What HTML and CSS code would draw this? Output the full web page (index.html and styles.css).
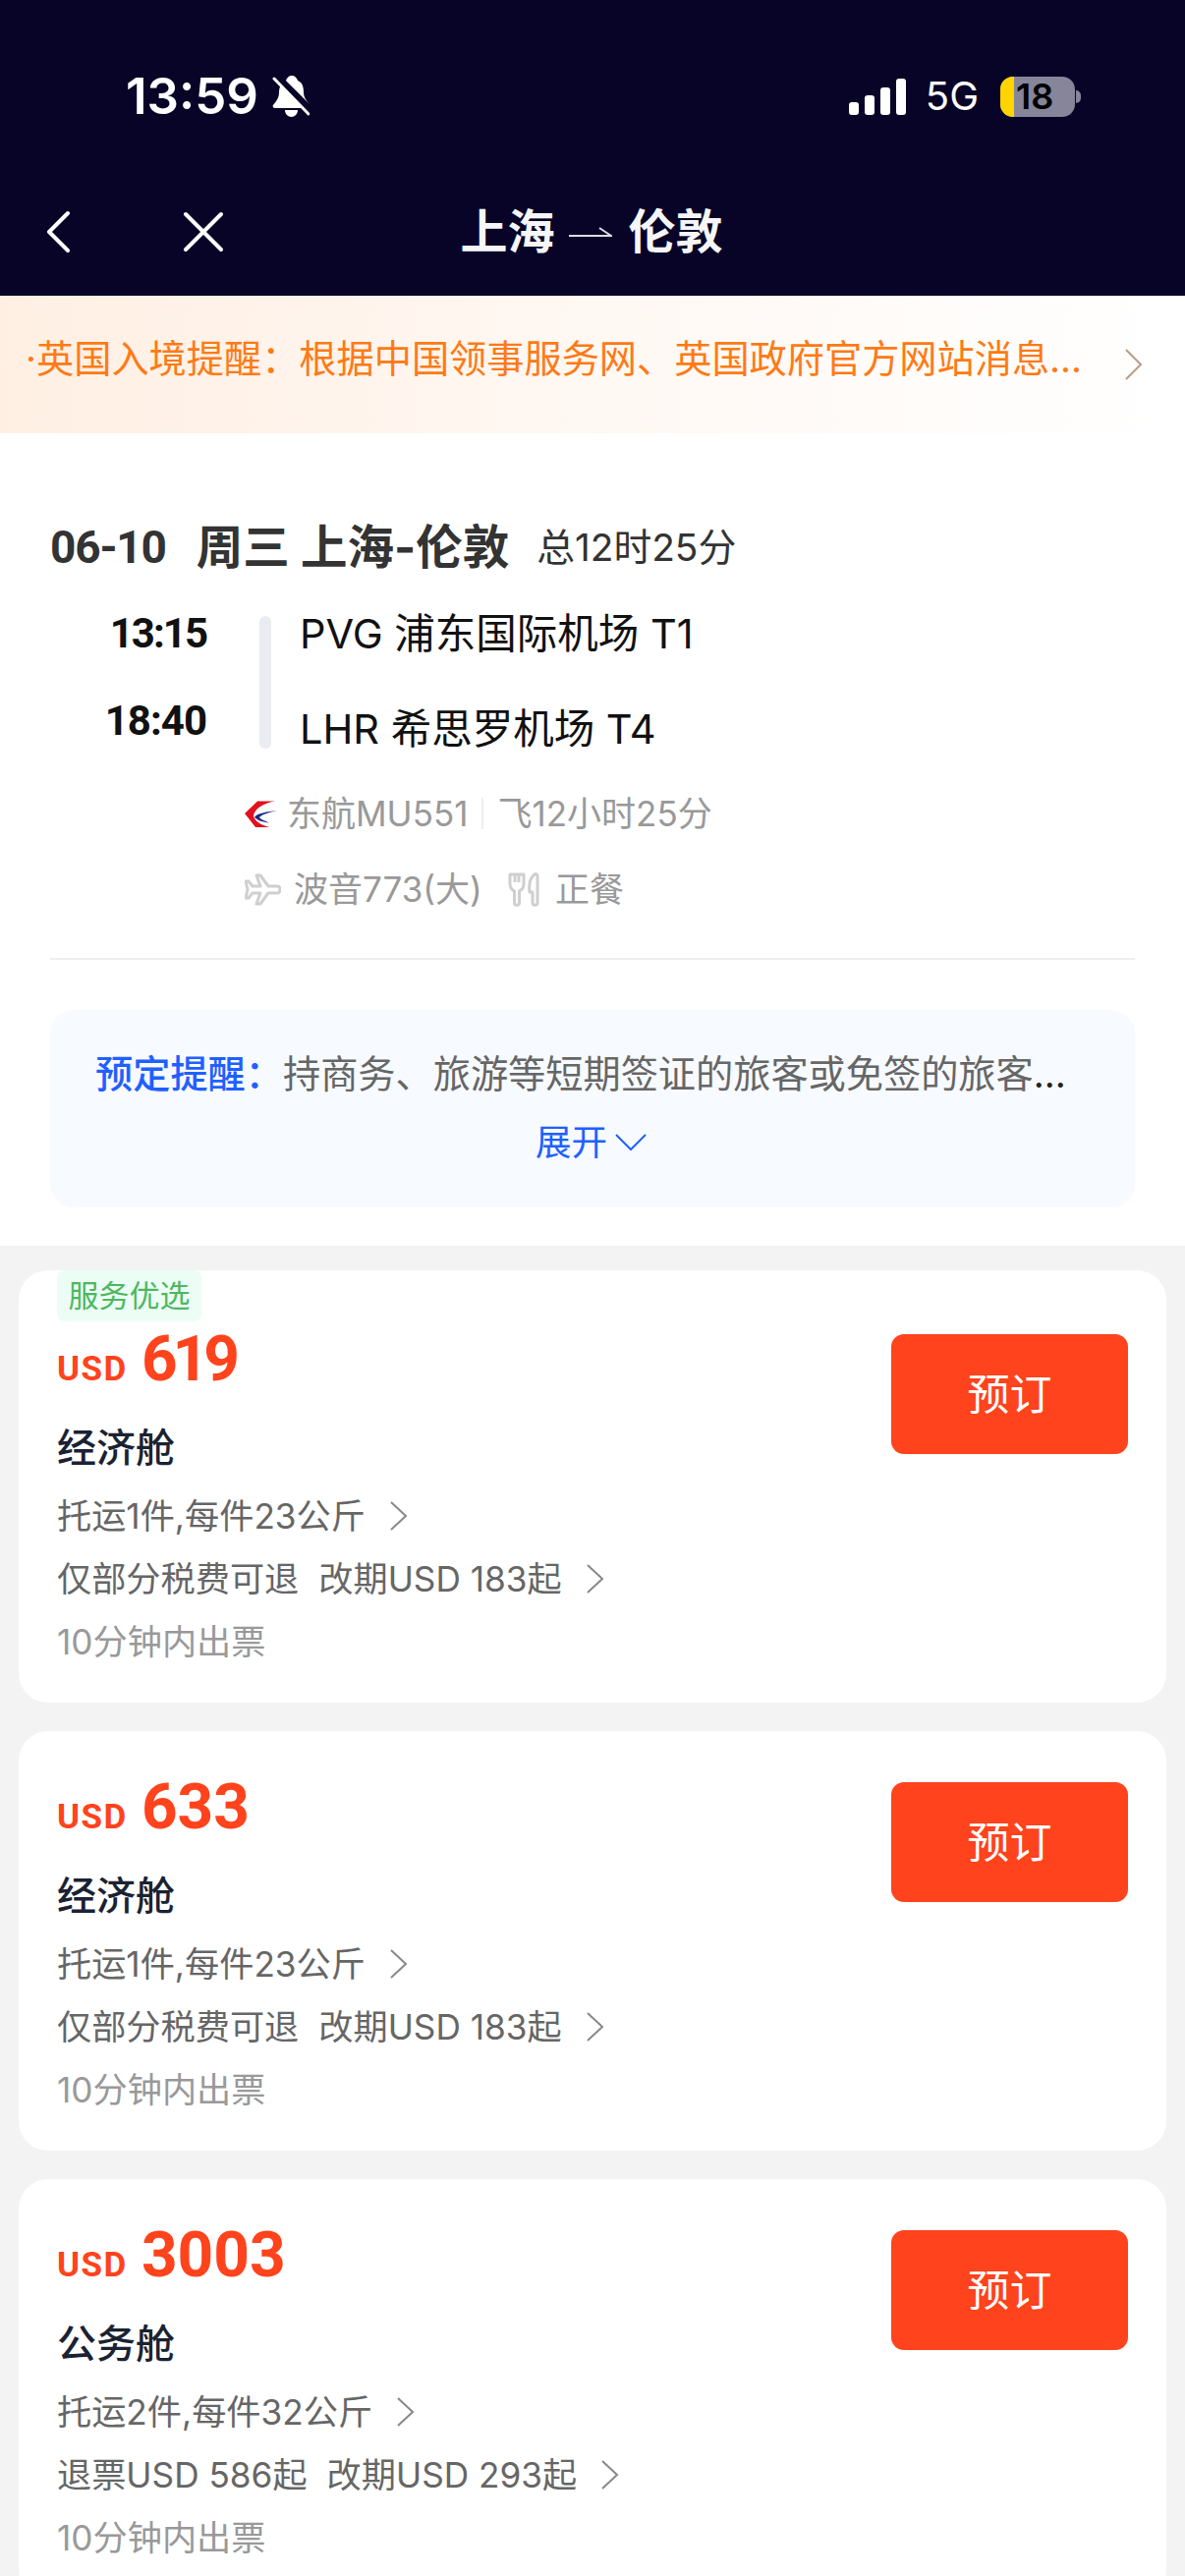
FILE: index.html
```html
<!DOCTYPE html>
<html lang="zh-CN">
<head>
<meta charset="utf-8">
<title>上海 - 伦敦</title>
<link rel="stylesheet" href="styles.css">
</head>
<body>
<div class="page">
  <header class="header">
    <div class="status">
      <div class="status-left">
        <span class="clock">13:59</span>
        <svg class="bell" viewBox="0 0 38 42"><path fill="#fff" d="M20 0c3 0 5 2 6 5 5 2 6 7 6 12 0 6 4 9 6 13 .5 1 0 3-2 3H3c-2 0-3-2-2-3 3-4 6-7 6-13 0-5 2-9 7-12 1-3 3-5 6-5z"/><path fill="#fff" d="M13 35h13c0 4-3 7-6.500 7S13 39 13 35z"/><path stroke="#080428" stroke-width="7" d="M4 0l34 34"/><path stroke="#fff" stroke-width="3" stroke-linecap="round" d="M2 3l35 36"/></svg>
      </div>
      <div class="status-right">
        <div class="signal"><i class="b1"></i><i class="b2"></i><i class="b3"></i><i class="b4"></i></div>
        <span class="net">5G</span>
        <div class="battery"><span class="battery-level"></span><span class="battery-num">18</span></div>
        <span class="battery-nub"></span>
      </div>
    </div>
    <nav class="nav">
      <div class="nav-left">
        <svg class="nav-back" viewBox="0 0 24 44"><path d="M22 3L3 22l19 19" fill="none" stroke="#fff" stroke-width="4" stroke-linecap="round" stroke-linejoin="round"/></svg>
        <svg class="nav-close" viewBox="0 0 42 42"><path d="M3 3l36 36M39 3L3 39" fill="none" stroke="#fff" stroke-width="4" stroke-linecap="round"/></svg>
      </div>
      <h1 class="nav-title">上海<svg class="nav-arrow" viewBox="0 0 44 10"><path d="M0 9h43L31 1" fill="none" stroke="#dcdce2" stroke-width="2"/></svg>伦敦</h1>
      <div></div>
    </nav>
  </header>

  <div class="notice">
    <span class="notice-text">·英国入境提醒：根据中国领事服务网、英国政府官方网站消息...</span>
    <svg class="notice-chev" viewBox="0 0 20 32"><path d="M2 1l15 15L2 31" fill="none" stroke="#b99c84" stroke-width="2"/></svg>
  </div>

  <section class="flight">
    <div class="flight-head">
      <span class="flight-date">06-10</span>
      <span class="flight-route">周三 上海-伦敦</span>
      <span class="flight-total">总12时25分</span>
    </div>
    <div class="route">
      <div class="route-times">
        <span>13:15</span>
        <span class="route-time-wide">18:40</span>
      </div>
      <div class="route-bar"></div>
      <div class="route-ports">
        <span>PVG 浦东国际机场 T1</span>
        <span>LHR 希思罗机场 T4</span>
      </div>
    </div>
    <div class="meta">
      <svg class="meta-logo" viewBox="0 0 33 27"><path fill="#e3101e" d="M31 .5H13L0 13l4 5 7 9h14C17 25 9 20 9 15 10 8 20 2 31 .5z"/><path fill="#1b2a86" d="M33 10c-10 1-21 3-23 7 3 3 9 5 15 5.500-5-2.500-9-3.500-10-5.500 2-3 10-5 18-7z"/></svg>
      <span>东航MU551</span>
      <i class="meta-sep"></i>
      <span>飞12小时25分</span>
    </div>
    <div class="meta meta-second">
      <svg class="meta-plane" viewBox="0 0 37 33"><path d="M33 13H24L16 2h-4l4 11H8L4 8H1l2 8.500L1 25h3l4-5h8l-4 11h4l8-11h9c4 0 4-7 0-7z" fill="none" stroke="#cfcfcf" stroke-width="3" stroke-linejoin="round"/></svg>
      <span class="meta-plane-text">波音773(大)</span>
      <svg class="meta-meal" viewBox="0 0 33 35"><path d="M2 2v10c0 5 3 6 4.500 7v12c0 3 5 3 5 0V19c1.500-1 4.500-2 4.500-7V2zM7 2v8M11 2v8M27 2c-4 3-6 10-5 18h3v11c0 3 5 3 5 0V4c0-2-2-3-3-2z" fill="none" stroke="#cfcfcf" stroke-width="3" stroke-linejoin="round"/></svg>
      <span>正餐</span>
    </div>
    <div class="flight-rule"></div>
    <div class="tip">
      <p class="tip-line"><b>预定提醒：</b><span class="tip-body">持商务、旅游等短期签证的旅客或免签的旅客</span><span class="tip-dots">...</span></p>
      <div class="tip-more">展开<svg class="tip-chev" viewBox="0 0 32 18"><path d="M1 1l15 15L31 1" fill="none" stroke="#1f60ff" stroke-width="2"/></svg></div>
    </div>
  </section>

  <main class="fares">
    <article class="fare fare-tagged">
      <span class="fare-tag">服务优选</span>
      <div class="fare-info">
        <div class="fare-price"><span class="fare-cur">USD</span><span class="fare-amt fare-amt-tight">619</span></div>
        <h2 class="fare-cabin">经济舱</h2>
        <div class="fare-row">托运1件,每件23公斤<svg class="chev" viewBox="0 0 18 30"><path d="M1 1l15 14L1 29" fill="none" stroke="#888" stroke-width="2"/></svg></div>
        <div class="fare-row"><span>仅部分税费可退</span><span class="fare-second">改期USD 183起</span><svg class="chev" viewBox="0 0 18 30"><path d="M1 1l15 14L1 29" fill="none" stroke="#888" stroke-width="2"/></svg></div>
        <div class="fare-row fare-note">10分钟内出票</div>
      </div>
      <button class="fare-btn">预订</button>
    </article>
    <article class="fare">
      <div class="fare-info">
        <div class="fare-price"><span class="fare-cur">USD</span><span class="fare-amt">633</span></div>
        <h2 class="fare-cabin">经济舱</h2>
        <div class="fare-row">托运1件,每件23公斤<svg class="chev" viewBox="0 0 18 30"><path d="M1 1l15 14L1 29" fill="none" stroke="#888" stroke-width="2"/></svg></div>
        <div class="fare-row"><span>仅部分税费可退</span><span class="fare-second">改期USD 183起</span><svg class="chev" viewBox="0 0 18 30"><path d="M1 1l15 14L1 29" fill="none" stroke="#888" stroke-width="2"/></svg></div>
        <div class="fare-row fare-note">10分钟内出票</div>
      </div>
      <button class="fare-btn">预订</button>
    </article>
    <article class="fare">
      <div class="fare-info">
        <div class="fare-price"><span class="fare-cur">USD</span><span class="fare-amt">3003</span></div>
        <h2 class="fare-cabin">公务舱</h2>
        <div class="fare-row">托运2件,每件32公斤<svg class="chev" viewBox="0 0 18 30"><path d="M1 1l15 14L1 29" fill="none" stroke="#888" stroke-width="2"/></svg></div>
        <div class="fare-row"><span>退票USD 586起</span><span class="fare-second">改期USD 293起</span><svg class="chev" viewBox="0 0 18 30"><path d="M1 1l15 14L1 29" fill="none" stroke="#888" stroke-width="2"/></svg></div>
        <div class="fare-row fare-note">10分钟内出票</div>
      </div>
      <button class="fare-btn">预订</button>
    </article>
  </main>
</div>
</body>
</html>
```
FILE: styles.css
```css
* { box-sizing: border-box; }
html, body { margin: 0; padding: 0; }
body {
  width: 1206px;
  height: 2622px;
  overflow: hidden;
  background: #f3f3f3;
  font-family: Inter, "Noto Sans CJK SC", sans-serif;
}
.page { width: 1206px; height: 2622px; overflow: hidden; }

/* header */
.header { height: 301px; background: #080428; color: #fff; }
.status {
  height: 170px;
  padding: 60px 106px 34px 128px;
  display: flex;
  justify-content: space-between;
  align-items: center;
}
.status-left { display: flex; align-items: center; gap: 14px; }
.clock { font-size: 51px; font-weight: 600; line-height: 76px; }
.bell { width: 38px; height: 42px; display: block; }
.status-right { display: flex; align-items: center; }
.signal { display: flex; align-items: flex-end; gap: 6px; height: 37px; }
.signal i { display: block; width: 10px; background: #fff; border-radius: 3px; }
.signal .b1 { height: 13px; }
.signal .b2 { height: 20px; }
.signal .b3 { height: 28px; }
.signal .b4 { height: 37px; }
.net { margin-left: 20px; font-size: 40px; line-height: 76px; font-weight: 400; }
.battery {
  position: relative;
  margin-left: 22px;
  width: 76px;
  height: 41px;
  border-radius: 13px;
  background: #86859a;
}
.battery-level { position: absolute; left: 0; top: 0; bottom: 0; width: 14px; background: #ffd400; border-radius: 13px 0 0 13px; }
.battery-num {
  position: absolute;
  left: 16px;
  top: 0;
  font-size: 36px;
  line-height: 41px;
  font-weight: 600;
  color: #000;
}
.battery-nub { width: 5px; height: 13px; margin-left: 1px; background: #86859a; border-radius: 0 6px 6px 0; }

.nav { height: 131px; display: grid; grid-template-columns: 1fr auto 1fr; align-items: center; }
.nav-left { display: flex; align-items: center; padding-left: 47px; gap: 115px; }
.nav-back { width: 24px; height: 44px; display: block; }
.nav-close { width: 42px; height: 42px; display: block; }
.nav-title {
  margin: 0 0 0 -2px;
  display: flex;
  align-items: center;
  font-size: 48px;
  line-height: 60px;
  font-weight: 700;
  color: #f6f6f8;
}
.nav-arrow { width: 44px; height: 10px; margin: 0 17px 0 14px; display: block; }

/* notice */
.notice {
  height: 140px;
  padding: 0 42px 0 26px;
  display: flex;
  align-items: center;
  justify-content: space-between;
  background: linear-gradient(90deg, #ffefe3 0%, #fff8f3 50%, #ffffff 100%);
}
.notice-text { font-size: 38.2px; line-height: 50px; color: #ff7a14; white-space: nowrap; margin-top: -13px; }
.notice-chev { width: 20px; height: 32px; display: block; }

/* flight */
.flight { background: #fff; padding: 90px 51px 39px; }
.flight-head { display: flex; align-items: center; height: 52px; color: #333; }
.flight-date { font-family: Roboto, sans-serif; font-size: 46px; font-weight: 700; line-height: 52px; letter-spacing: -1.2px; }
.flight-route { margin-left: 31px; font-size: 47.5px; font-weight: 700; line-height: 52px; }
.flight-total { margin-left: 28px; font-size: 38.8px; line-height: 52px; }

.route { margin-top: 44px; display: flex; align-items: flex-start; }
.route-times {
  width: 159px;
  display: flex;
  flex-direction: column;
  align-items: flex-end;
  gap: 53px;
  font-family: Roboto, sans-serif;
  font-size: 42px;
  font-weight: 700;
  line-height: 36px;
  letter-spacing: -2px;
  color: #111;
}
.route-time-wide { letter-spacing: -1px; }
.route-bar { width: 12px; height: 135px; margin-left: 54px; background: #eaecf2; border-radius: 6px; }
.route-ports {
  margin-left: 29px;
  display: flex;
  flex-direction: column;
  gap: 61px;
  font-size: 41.5px;
  line-height: 36px;
  color: #111;
}

.meta {
  margin-top: 46px;
  padding-left: 198px;
  height: 40px;
  display: flex;
  align-items: center;
  font-size: 35px;
  line-height: 40px;
  color: #999;
}
.meta-second { margin-top: 37px; }
.meta-logo { width: 33px; height: 27px; margin-right: 10px; display: block; }
.meta-sep { width: 2px; height: 32px; margin: 0 14px; background: #eee; display: block; }
.meta-plane { width: 37px; height: 33px; margin-right: 13px; display: block; }
.meta-meal { width: 33px; height: 35px; margin: 0 15px 0 26px; display: block; }

.flight-rule { margin-top: 50px; height: 2px; background: #eee; }

.tip {
  margin-top: 51px;
  height: 201px;
  padding: 40px 46px 0;
  background: #f7faff;
  border-radius: 24px;
}
.tip-line { margin: 0; font-size: 38.2px; line-height: 50px; color: #666; white-space: nowrap; }
.tip-line b { font-weight: 500; color: #1f60ff; }
.tip-dots { color: #222; }
.tip-more {
  margin-top: 20px;
  display: flex;
  align-items: center;
  justify-content: center;
  padding-right: 3px;
  font-size: 36.5px;
  line-height: 50px;
  color: #1f60ff;
}
.tip-chev { width: 32px; height: 18px; margin-left: 8px; display: block; }

/* fares */
.fares { padding: 25px 19px 0; display: flex; flex-direction: column; gap: 29px; }
.fare {
  position: relative;
  padding: 0 39px 0 39px;
  display: flex;
  justify-content: space-between;
  align-items: flex-start;
  background: #fff;
  border-radius: 30px;
  flex: none;
}
.fare-tagged { padding-top: 13px; }
.fare-tag {
  position: absolute;
  left: 39px;
  top: 0;
  width: 147px;
  height: 52px;
  background: #ecfdf5;
  border-radius: 8px;
  color: #4cb85e;
  font-size: 31px;
  line-height: 52px;
  text-align: center;
}
.fare-info { padding: 43px 0 40px; }
.fare-price { display: flex; align-items: baseline; height: 70px; line-height: 70px; color: #ff431c; font-family: Roboto, sans-serif; font-weight: 700; }
.fare-cur { font-size: 35px; letter-spacing: 1.5px; }
.fare-amt { margin-left: 14px; font-size: 64px; }
.fare-amt-tight { letter-spacing: -5px; }
.fare-cabin { margin: 31px 0 0; font-size: 40px; line-height: 48px; font-weight: 500; color: #1a2233; }
.fare-row {
  margin-top: 20px;
  height: 44px;
  display: flex;
  align-items: center;
  font-size: 35.2px;
  line-height: 44px;
  color: #666;
  white-space: nowrap;
}
.fare-cabin + .fare-row { margin-top: 23px; }
.fare-second { margin-left: 20px; }
.fare-note { color: #999; }
.chev { width: 18px; height: 30px; margin-left: 25px; display: block; }
.fare-btn {
  margin-top: 52px;
  width: 241px;
  height: 122px;
  flex: none;
  border: 0;
  border-radius: 13px;
  background: #ff431c;
  color: #fff;
  font-family: inherit;
  font-size: 43px;
  font-weight: 400;
  padding: 0 0 7px;
}
```
